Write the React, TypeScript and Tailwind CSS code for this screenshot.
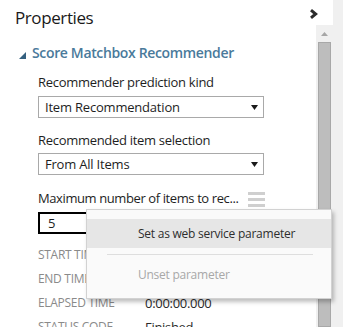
import React from "react";

function Caret() {
  return (
    <svg width="7" height="5" viewBox="0 0 7 5" className="shrink-0">
      <polygon points="0,0 7,0 3.5,5" fill="#1a1a1a" />
    </svg>
  );
}

function Select({ value }: { value: string }) {
  return (
    <div className="w-[226px] h-[22px] border border-[#a9a9a9] bg-white flex items-center justify-between pl-[6px] pr-[5px]">
      <span className="text-[13px] leading-[20px] text-[#1e1e1e] tracking-[-0.2px]">{value}</span>
      <Caret />
    </div>
  );
}

export default function App() {
  return (
    <div className="relative w-[343px] h-[327px] overflow-hidden bg-white flex font-['Open_Sans',sans-serif]">
      <div className="w-[333px] h-full flex flex-col">
        <div className="h-[25px] shrink-0 flex justify-between">
          <div className="pl-[15px] pt-[5px] text-[17px] leading-[25px] text-[#1a1a1a] tracking-[-0.4px]">
            Properties
          </div>
          <svg width="9" height="10" viewBox="0 0 9 10" className="mt-[9px] mr-[15px]">
            <path d="M2 1.2 L6.6 5 L2 8.8" fill="none" stroke="#2b2b2b" strokeWidth="3" strokeLinejoin="miter" />
          </svg>
        </div>
        <div className="flex-1 flex min-h-0">
          <div className="flex-1 pt-[18px]">
            <div className="flex items-start h-[20px] pl-[19px]">
              <svg width="7" height="7" viewBox="0 0 7 7" className="mt-[9px] shrink-0">
                <polygon points="7,0 7,7 0,7" fill="#34607f" />
              </svg>
              <span className="ml-[6px] text-[14px] leading-[20px] font-semibold text-[#4a7a9b] tracking-[-0.35px]">
                Score Matchbox Recommender
              </span>
            </div>
            <div className="pl-[38px]">
              <div className="mt-[10px] text-[13px] leading-[18px] text-[#1e1e1e] tracking-[-0.3px]">
                Recommender prediction kind
              </div>
              <div className="mt-[5px]">
                <Select value="Item Recommendation" />
              </div>
              <div className="mt-[13px] text-[13px] leading-[18px] text-[#1e1e1e] tracking-[-0.3px]">
                Recommended item selection
              </div>
              <div className="mt-[4px]">
                <Select value="From All Items" />
              </div>
              <div className="mt-[14px] w-[226px] flex items-start justify-between">
                <span className="text-[13px] leading-[18px] text-[#1e1e1e] tracking-[-0.4px]">
                  Maximum number of items to rec...
                </span>
                <div className="mt-[3px] mr-[-1px] w-[17px] flex flex-col gap-[3px]">
                  <div className="h-[3px] bg-[#cfcfcf]" />
                  <div className="h-[3px] bg-[#cfcfcf]" />
                  <div className="h-[3px] bg-[#cfcfcf]" />
                </div>
              </div>
              <div className="mt-[5px] w-[226px] h-[22px] border-2 border-black flex items-center pl-[8px]">
                <span className="text-[13px] leading-[18px] text-[#1e1e1e]">5</span>
              </div>
              <div className="mt-[9px] text-[12px] leading-[24px] tracking-[-0.3px]">
                {[
                  ["START TIME", ""],
                  ["END TIME", ""],
                  ["ELAPSED TIME", "0:00:00.000"],
                  ["STATUS CODE", "Finished"],
                ].map(([k, v]) => (
                  <div key={k} className="flex">
                    <span className="w-[107px] text-[#8a8a8a]">{k}</span>
                    <span className="text-[13px] text-[#2a2a2a]">{v}</span>
                  </div>
                ))}
              </div>
            </div>
          </div>
          <div className="w-[17px] bg-[#f0f0f0] flex flex-col items-center">
            <svg width="7" height="4" viewBox="0 0 7 4" className="mt-[7px]">
              <polygon points="3.5,0 7,4 0,4" fill="#a6a6a6" />
            </svg>
            <div className="mt-[6px] w-[13px] flex-1 bg-[#bdbdbd] border border-[#a8a8a8]" />
          </div>
        </div>
      </div>
      <div className="w-[10px] h-full bg-[#f0f0f0]" />

      <div className="absolute left-[86px] top-[209px] w-[246px] h-[90px] bg-[#fafafa] border border-[#d2d2d2] shadow-[2px_3px_4px_rgba(0,0,0,0.25)] pt-[9px]">
        <div className="h-[29px] bg-[#e6e6e6] pl-[51px] text-[12px] leading-[29px] text-[#2e2e2e] tracking-[-0.25px]">
          Set as web service parameter
        </div>
        <div className="mt-[6px] ml-[20px] mr-[18px] h-px bg-[#dedede]" />
        <div className="mt-[5px] h-[29px] pl-[51px] text-[12px] leading-[29px] text-[#a8a8a8] tracking-[-0.25px]">
          Unset parameter
        </div>
      </div>
    </div>
  );
}
